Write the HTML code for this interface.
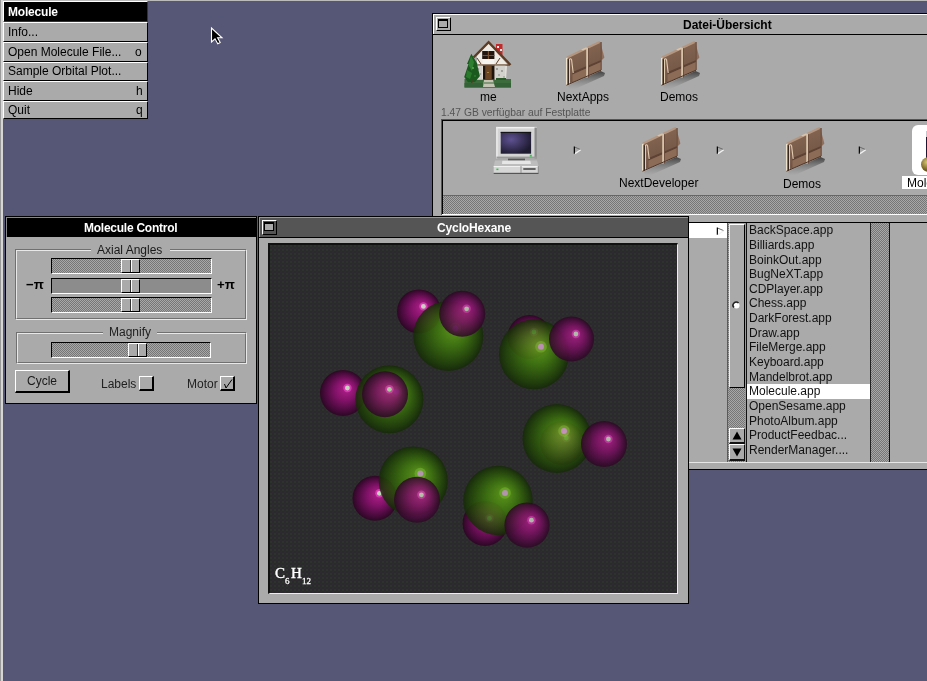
<!DOCTYPE html>
<html><head><meta charset="utf-8">
<style>
html,body{margin:0;padding:0;}
body{width:927px;height:681px;position:relative;overflow:hidden;background:#565676;font-family:"Liberation Sans",sans-serif;font-size:12px;color:#000;}
.a{position:absolute;box-sizing:border-box;}
.t{position:absolute;white-space:pre;line-height:1;will-change:transform;}
.b{font-weight:bold;}
.knob{width:19px;height:14px;background:linear-gradient(90deg,transparent 8px,#333 8px,#333 9px,#fff 9px,#fff 10px,transparent 10px),#aaa;border-left:1px solid #fff;border-top:1px solid #fff;border-right:1px solid #000;border-bottom:1px solid #000;box-sizing:border-box;}
.dith{background-color:#999;background-image:repeating-conic-gradient(#767676 0 25%,#a8a8a8 0 50%);background-size:2px 2px;}
</style></head><body>
<svg width="0" height="0" style="position:absolute">
<defs>
<linearGradient id="fg" x1="0" y1="0" x2="0.3" y2="1"><stop offset="0" stop-color="#8a6a56"/><stop offset="1" stop-color="#6e5242"/></linearGradient>
<radialGradient id="scr" cx="0.35" cy="0.35" r="0.7"><stop offset="0" stop-color="#5e5290"/><stop offset="1" stop-color="#1e1a30"/></radialGradient>
<linearGradient id="shd" x1="0" y1="0" x2="0" y2="1"><stop offset="0" stop-color="#333" stop-opacity=".9"/><stop offset="1" stop-color="#777" stop-opacity="0"/></linearGradient>
<symbol id="fold" viewBox="0 0 44 50">
 <polygon points="2,44.5 34.5,30 39,32 38,35 8,48.5 3,48" fill="url(#shd)"/>
 <polygon points="0.3,17 33.6,0.8 35.2,1.5 35.2,29 0.3,43.8" fill="url(#fg)"/>
 <polygon points="35,4 38.4,16.5 36.5,18.5 35,19" fill="#8e6e5c"/>
 <polyline points="1,16.6 33.6,1" stroke="#b49680" stroke-width="2.2" fill="none"/>
 <polygon points="6.5,31 35.2,19 35.2,21 6.5,33.5" fill="#5e4234"/>
 <polygon points="6.5,33.5 35.2,21 35.2,29 6.5,41" fill="#8c6c56"/>
 <line x1="35.2" y1="1" x2="35.2" y2="29" stroke="#6a4c3c" stroke-width="1"/>
 <rect x="20.2" y="7" width="1.8" height="29.5" fill="#d8c2aa"/>
 <line x1="22.5" y1="7" x2="22.5" y2="36.5" stroke="#6a4c3c" stroke-width=".9"/>
 <polygon points="15,8.5 20,6.2 22.6,7 17,9.5" fill="#d8c2aa"/>
 <polygon points="0,17 1.6,16.4 1.6,43.5 0,44" fill="#efe2cc"/>
 <polygon points="1.6,18 3,18.5 3,44 1.6,44" fill="#2e2018"/>
 <path d="M3.5,43.5 L3.5,18.3 Q4.8,16.8 5.6,19 L7.2,32" stroke="#e2ccb2" stroke-width="1.1" fill="none"/>
 <line x1="0.5" y1="44.2" x2="35" y2="29.2" stroke="#4a3428" stroke-width="1"/>
</symbol>
</defs></svg>
<!-- screen edges -->
<div class="a" style="left:0;top:0;width:927px;height:1px;background:#bbb"></div>
<div class="a" style="left:0;top:0;width:1px;height:681px;background:#999"></div>
<div class="a" style="left:1px;top:0;width:2px;height:681px;background:#d6d6d6"></div>

<!-- ============ MENU ============ -->
<div id="menu">
<div class="a" style="left:3px;top:1px;width:145px;height:21px;background:#000;border-left:1px solid #fff;border-top:1px solid #fff;border-right:1px solid #333;border-bottom:1px solid #333"></div>
<div class="t b" style="left:8px;top:6px;color:#fff;font-size:12px;letter-spacing:-0.2px">Molecule</div>
<div class="a" style="left:3px;top:22px;width:145px;height:20px;background:#aaa;border-left:1px solid #fff;border-top:1px solid #fff;border-right:1px solid #000;border-bottom:1px solid #000"></div>
<div class="t" style="left:8px;top:26px">Info...</div>
<div class="a" style="left:3px;top:42px;width:145px;height:20px;background:#aaa;border-left:1px solid #fff;border-top:1px solid #fff;border-right:1px solid #000;border-bottom:1px solid #000"></div>
<div class="t" style="left:8px;top:46px">Open Molecule File...</div>
<div class="t" style="left:135px;top:46px">o</div>
<div class="a" style="left:3px;top:62px;width:145px;height:19px;background:#aaa;border-left:1px solid #fff;border-top:1px solid #fff;border-right:1px solid #000;border-bottom:1px solid #000"></div>
<div class="t" style="left:8px;top:65px">Sample Orbital Plot...</div>
<div class="a" style="left:3px;top:81px;width:145px;height:20px;background:#aaa;border-left:1px solid #fff;border-top:1px solid #fff;border-right:1px solid #000;border-bottom:1px solid #000"></div>
<div class="t" style="left:8px;top:85px">Hide</div>
<div class="t" style="left:136px;top:85px">h</div>
<div class="a" style="left:3px;top:101px;width:145px;height:18px;background:#aaa;border-left:1px solid #fff;border-top:1px solid #fff;border-right:1px solid #000;border-bottom:1px solid #000"></div>
<div class="t" style="left:8px;top:104px">Quit</div>
<div class="t" style="left:136px;top:104px">q</div>
</div>

<!-- cursor -->
<svg class="a" style="left:209px;top:26px" width="16" height="20" viewBox="0 0 16 20"><polygon points="2.5,2 2.5,16 6,12.8 8.8,17.8 11.2,16.6 8.6,11.8 13,11.8" fill="#000" stroke="#fff" stroke-width="1.1" stroke-linejoin="miter"/></svg>
<!-- ============ DATEI WINDOW ============ -->
<div id="datei">
<div class="a" style="left:432px;top:13px;width:500px;height:457px;background:#aaa;border:1px solid #000"></div>
<div class="a" style="left:433px;top:14px;width:500px;height:1px;background:#fff"></div>
<div class="a" style="left:433px;top:14px;width:1px;height:20px;background:#fff"></div>
<div class="a" style="left:432px;top:34px;width:500px;height:1px;background:#000"></div>
<!-- miniaturize btn -->
<div class="a" style="left:436px;top:17px;width:15px;height:14px;background:#aaa;border-left:1px solid #fff;border-top:1px solid #fff;border-right:1px solid #000;border-bottom:1px solid #000"></div>
<div class="a" style="left:438px;top:19px;width:10px;height:9px;background:#aaa;border:1px solid #000;border-top-width:2px"></div>
<div class="t b" style="left:683px;top:19px;">Datei-Übersicht</div>
<!-- shelf icons -->
<svg class="a" style="left:460px;top:38px" width="55" height="52" viewBox="0 0 55 52">
  <polygon points="4.5,41 51,41 51,49.5 4.5,49.5" fill="#3c6c3c"/>
  <polygon points="4.5,45 51,45 51,49.5 4.5,49.5" fill="#346236"/>
  <polygon points="24,42 33,42 35,49 23,49" fill="#c4c4b4"/><rect x="24" y="44.5" width="11" height="1" fill="#3c6c3c"/>
  <rect x="36" y="6" width="6.5" height="11" fill="#c42a2a"/>
  <rect x="37" y="8" width="2" height="2" fill="#eee"/><rect x="40" y="11" width="2" height="2" fill="#eee"/>
  <polygon points="17,18 28.6,5 47,26 46,41.5 17,41.5" fill="#eeeae4"/>
  <polyline points="13.5,19.5 28.6,4.2 50.5,27" fill="none" stroke="#5e3c24" stroke-width="2.4"/>
  <rect x="22.2" y="13" width="12.2" height="8" fill="#24160e"/>
  <rect x="27.8" y="13" width="1.2" height="8" fill="#7a5030"/>
  <rect x="22.2" y="17" width="12.2" height="1" fill="#7a5030"/>
  <rect x="22.5" y="21.4" width="11.5" height="5" fill="#f6f4f0"/>
  <line x1="17" y1="20" x2="21" y2="26" stroke="#5e3c24" stroke-width="1"/>
  <line x1="40" y1="20" x2="36" y2="26" stroke="#5e3c24" stroke-width="1"/>
  <rect x="16.5" y="26.4" width="33" height="1.3" fill="#5e3c24"/>
  <rect x="16.8" y="27.7" width="5.7" height="13.8" fill="#d4d2cc"/><circle cx="18.5" cy="31" r=".8" fill="#8a8a88"/><circle cx="20.5" cy="36" r=".8" fill="#8a8a88"/><circle cx="18" cy="39" r=".8" fill="#9a9a98"/>
  <rect x="34.8" y="27.7" width="10.7" height="13.8" fill="#d4d2cc"/><circle cx="37" cy="31" r=".9" fill="#8a8a88"/><circle cx="42" cy="33" r=".9" fill="#8a8a88"/><circle cx="39" cy="37" r=".9" fill="#9a9a98"/><circle cx="44" cy="39" r=".8" fill="#8a8a88"/>
  <rect x="23" y="27.7" width="11.5" height="14" fill="#1e140c"/>
  <rect x="25.2" y="27.7" width="6.5" height="13.8" fill="#6a4626"/>
  <rect x="27.5" y="34" width="1" height="1" fill="#e0c060"/>
  <polygon points="11.3,15.7 7,26 8.5,26 4.2,39 8,44.3 15,44 19.9,38 17,26 17.5,26" fill="#1a5a1e"/>
  <polygon points="11,18 8.5,27 12,33 14,24" fill="#2e8030"/><circle cx="13" cy="30" r="1" fill="#5aa850"/><circle cx="9" cy="36" r="1" fill="#5aa850"/><circle cx="15" cy="38" r="1" fill="#2c7a2c"/>
  <polygon points="7,32 6,39 10,41 12,35" fill="#2a7a2c"/>
  <rect x="11" y="42" width="1.5" height="3" fill="#5a3a22"/>
  <rect x="36" y="40" width="10" height="2" fill="#2a5a2a"/>
</svg>
<div class="t" style="left:480px;top:91px">me</div>
<svg class="a" style="left:566px;top:41px" width="44" height="50" viewBox="0 0 44 50"><use href="#fold"/></svg>
<div class="t" style="left:557px;top:91px">NextApps</div>
<svg class="a" style="left:661px;top:41px" width="44" height="50" viewBox="0 0 44 50"><use href="#fold"/></svg>
<div class="t" style="left:660px;top:91px">Demos</div>
<div class="t" style="left:441px;top:108px;font-size:10.3px;color:#555">1.47 GB verfügbar auf Festplatte</div>

<!-- path box -->
<div class="a" style="left:441px;top:119px;width:500px;height:96px;background:#aaa;border-left:1px solid #555;border-top:1px solid #555"></div>
<div class="a" style="left:442px;top:120px;width:500px;height:95px;border-left:1px solid #000;border-top:1px solid #000"></div>
<div class="a" style="left:443px;top:195px;width:500px;height:1px;background:#666"></div>
<div class="a dith" style="left:443px;top:196px;width:500px;height:18px;"></div>
<div class="a" style="left:442px;top:214px;width:500px;height:1px;background:#fff"></div>
<!-- computer icon -->
<svg class="a" style="left:490px;top:122px" width="55" height="56" viewBox="0 0 55 56">
  <rect x="6.2" y="4.9" width="40.7" height="31.7" rx="1.5" fill="#d4d4d4"/>
  <rect x="6.2" y="4.9" width="40.7" height="1.5" fill="#f2f2f2"/>
  <rect x="6.2" y="4.9" width="1.5" height="31.7" fill="#ececec"/>
  <rect x="44.5" y="5.5" width="2.4" height="31" fill="#8a8a8a"/>
  <rect x="6.5" y="34.6" width="40.4" height="2" fill="#9a9a9a"/>
  <rect x="10.7" y="9.9" width="30.4" height="21.8" fill="url(#scr)"/>
  <rect x="10.7" y="9.9" width="30.4" height="1" fill="#111"/>
  <rect x="39.8" y="32.8" width="2" height="1.8" fill="#22cc44"/>
  <rect x="18" y="36.6" width="17" height="2.2" fill="#555"/>
  <polygon points="5,38.6 47,38.6 48.5,44 3.7,44" fill="#bdbdbd"/>
  <polygon points="12.3,38.7 40.3,38.7 41,42 12,42" fill="#e6e6e6"/>
  <rect x="3.7" y="44" width="44.8" height="7" fill="#d6d6d6"/>
  <rect x="3.7" y="44" width="44.8" height="1" fill="#f0f0f0"/>
  <rect x="3.7" y="50.8" width="44.8" height="1.2" fill="#555"/>
  <rect x="30.6" y="44" width=".8" height="7" fill="#808080"/>
  <rect x="33.3" y="46.3" width="12.3" height="1.4" fill="#333"/>
  <rect x="6.4" y="46.6" width="2" height="1.5" fill="#22cc44"/>
  <rect x="47.8" y="44" width="1" height="7" fill="#888"/>
</svg>
<svg class="a" style="left:572px;top:145px" width="12" height="12" viewBox="0 0 12 12"><line x1="2.35" y1="1.5" x2="2.35" y2="8.8" stroke="#000" stroke-width="1.2"/><line x1="3" y1="2.2" x2="8.8" y2="4.7" stroke="#6a6a6a" stroke-width="1"/><line x1="3" y1="8.6" x2="8.8" y2="4.7" stroke="#f2f2f2" stroke-width="1.3"/></svg>
<svg class="a" style="left:642px;top:127px" width="44" height="50" viewBox="0 0 44 50"><use href="#fold"/></svg>
<div class="t" style="left:619px;top:177px">NextDeveloper</div>
<svg class="a" style="left:714.7px;top:145px" width="12" height="12" viewBox="0 0 12 12"><line x1="2.35" y1="1.5" x2="2.35" y2="8.8" stroke="#000" stroke-width="1.2"/><line x1="3" y1="2.2" x2="8.8" y2="4.7" stroke="#6a6a6a" stroke-width="1"/><line x1="3" y1="8.6" x2="8.8" y2="4.7" stroke="#f2f2f2" stroke-width="1.3"/></svg>
<svg class="a" style="left:785.5px;top:126.5px" width="44" height="50" viewBox="0 0 44 50"><use href="#fold"/></svg>
<div class="t" style="left:783px;top:178px">Demos</div>
<svg class="a" style="left:857.2px;top:145px" width="12" height="12" viewBox="0 0 12 12"><line x1="2.35" y1="1.5" x2="2.35" y2="8.8" stroke="#000" stroke-width="1.2"/><line x1="3" y1="2.2" x2="8.8" y2="4.7" stroke="#6a6a6a" stroke-width="1"/><line x1="3" y1="8.6" x2="8.8" y2="4.7" stroke="#f2f2f2" stroke-width="1.3"/></svg>
<!-- Molecule app icon -->
<div class="a" style="left:912px;top:125px;width:30px;height:50px;background:#fff;border-radius:6px"></div>
<div class="a" style="left:926px;top:131px;width:5px;height:6px;background:#c8c8d0"></div><div class="a" style="left:926px;top:137px;width:5px;height:21px;background:#1e1634"></div>
<div class="a" style="left:921px;top:157px;width:15px;height:15px;border-radius:50%;background:radial-gradient(circle at 40% 35%,#d8c878,#7a6424 55%,#2e2410)"></div>
<div class="a" style="left:902px;top:176px;width:30px;height:13px;background:#fff"></div>
<div class="t" style="left:906.5px;top:177px">Molecule</div>

<!-- browser columns -->
<div class="a" style="left:432px;top:222px;width:500px;height:1px;background:#000"></div>
<div class="a" style="left:689px;top:223px;width:39px;height:15px;background:#fff"></div>
<svg class="a" style="left:715px;top:225.5px" width="12" height="12" viewBox="0 0 12 12"><line x1="2.35" y1="1.5" x2="2.35" y2="8.8" stroke="#000" stroke-width="1.2"/><line x1="3" y1="2.2" x2="8.8" y2="4.7" stroke="#6a6a6a" stroke-width="1"/><line x1="3" y1="8.6" x2="8.8" y2="4.7" stroke="#f2f2f2" stroke-width="1.3"/></svg>
<!-- scroller A -->
<div class="a" style="left:727px;top:223px;width:1px;height:239px;background:#5a5a5a"></div>
<div class="a dith" style="left:728px;top:223px;width:18px;height:239px;"></div>
<div class="a" style="left:728px;top:223px;width:18px;height:1px;background:#aaa"></div>
<div class="a" style="left:729px;top:224px;width:16px;height:164px;background:#aaa;border-left:1px solid #eee;border-top:1px solid #fff;border-right:1px solid #000;border-bottom:1px solid #000"></div>
<svg class="a" style="left:732px;top:301px" width="9" height="9" viewBox="0 0 9 9"><circle cx="4.5" cy="4.5" r="3" fill="#fff"/><path d="M2,6.5 A3,3 0 0 1 6.5,2" stroke="#222" stroke-width="1.6" fill="none"/></svg>
<div class="a" style="left:729px;top:428px;width:16px;height:16px;background:#aaa;border-left:1px solid #fff;border-top:1px solid #fff;border-right:1px solid #111;border-bottom:2px solid #111"></div>
<svg class="a" style="left:731px;top:431px" width="12" height="10" viewBox="0 0 12 10"><polygon points="6,0.5 10.5,8.5 1.5,8.5" fill="#000"/></svg>
<div class="a" style="left:729px;top:444px;width:16px;height:17px;background:#aaa;border-left:1px solid #fff;border-top:1px solid #fff;border-right:1px solid #111;border-bottom:2px solid #111"></div>
<svg class="a" style="left:731px;top:448px" width="12" height="10" viewBox="0 0 12 10"><polygon points="1.5,0.5 10.5,0.5 6,8.5" fill="#000"/></svg>
<div class="a" style="left:745px;top:223px;width:1px;height:239px;background:#999"></div>
<!-- list B -->
<div class="a" style="left:746px;top:223px;width:1px;height:239px;background:#111"></div>
<div class="a" style="left:747px;top:384px;width:123px;height:15px;background:#fff"></div>
<div id="listB" style="position:absolute;left:749px;top:223px;color:#111">
<div class="t" style="left:0;top:1.24px">BackSpace.app</div>
<div class="t" style="left:0;top:15.89px">Billiards.app</div>
<div class="t" style="left:0;top:30.54px">BoinkOut.app</div>
<div class="t" style="left:0;top:45.19px">BugNeXT.app</div>
<div class="t" style="left:0;top:59.84px">CDPlayer.app</div>
<div class="t" style="left:0;top:74.49px">Chess.app</div>
<div class="t" style="left:0;top:89.14px">DarkForest.app</div>
<div class="t" style="left:0;top:103.79px">Draw.app</div>
<div class="t" style="left:0;top:118.44px">FileMerge.app</div>
<div class="t" style="left:0;top:133.09px">Keyboard.app</div>
<div class="t" style="left:0;top:147.74px">Mandelbrot.app</div>
<div class="t" style="left:0;top:162.39px">Molecule.app</div>
<div class="t" style="left:0;top:177.04px">OpenSesame.app</div>
<div class="t" style="left:0;top:191.69px">PhotoAlbum.app</div>
<div class="t" style="left:0;top:206.34px">ProductFeedbac...</div>
<div class="t" style="left:0;top:220.99px">RenderManager....</div>
</div>
<!-- scroller B -->
<div class="a" style="left:870px;top:223px;width:1px;height:239px;background:#222"></div>
<div class="a dith" style="left:871px;top:223px;width:18px;height:239px;"></div>
<div class="a" style="left:889px;top:223px;width:1px;height:239px;background:#111"></div>
<div class="a" style="left:689px;top:462px;width:300px;height:1px;background:#e6e6e6"></div>
</div>

<!-- ============ MOLECULE CONTROL ============ -->
<div id="ctrl">
<div class="a" style="left:5px;top:216px;width:252px;height:188px;background:#aaa;border:1px solid #000"></div>
<div class="a" style="left:6px;top:217px;width:250px;height:20px;background:#000;border-left:1px solid #888;border-top:1px solid #888"></div>
<div class="t b" style="left:84px;top:222px;color:#fff;letter-spacing:-0.25px">Molecule Control</div>
<!-- axial group -->
<div class="a" style="left:15px;top:249px;width:232px;height:71px;border-left:1px solid #707070;border-top:1px solid #707070;border-right:1px solid #e8e8e8;border-bottom:1px solid #e8e8e8"></div>
<div class="a" style="left:16px;top:250px;width:230px;height:69px;border-left:1px solid #e8e8e8;border-top:1px solid #e8e8e8;border-right:1px solid #707070;border-bottom:1px solid #707070"></div>
<div class="a" style="left:91px;top:244px;width:79px;height:10px;background:#aaa"></div>
<div class="t" style="left:97px;top:244px;color:#1a1a1a">Axial Angles</div>
<div class="a dith" style="left:51px;top:258px;width:161px;height:16px;border-left:1px solid #000;border-top:1px solid #000;border-right:1px solid #fff;border-bottom:1px solid #fff"></div>
<div class="a" style="left:51px;top:278px;width:161px;height:16px;background:#8c8c8c;border-left:1px solid #000;border-top:1px solid #000;border-right:1px solid #fff;border-bottom:1px solid #fff"></div>
<div class="a dith" style="left:51px;top:297px;width:161px;height:16px;border-left:1px solid #000;border-top:1px solid #000;border-right:1px solid #fff;border-bottom:1px solid #fff"></div>
<div class="a knob" style="left:121px;top:259px"></div>
<div class="a knob" style="left:121px;top:279px"></div>
<div class="a knob" style="left:121px;top:298px"></div>
<div class="t b" style="left:26px;top:277.5px;font-size:13.2px">−π</div>
<div class="t b" style="left:217px;top:277.5px;font-size:13.2px">+π</div>
<!-- magnify group -->
<div class="a" style="left:16px;top:332px;width:231px;height:32px;border-left:1px solid #707070;border-top:1px solid #707070;border-right:1px solid #e8e8e8;border-bottom:1px solid #e8e8e8"></div>
<div class="a" style="left:17px;top:333px;width:229px;height:30px;border-left:1px solid #e8e8e8;border-top:1px solid #e8e8e8;border-right:1px solid #707070;border-bottom:1px solid #707070"></div>
<div class="a" style="left:103px;top:327px;width:54px;height:10px;background:#aaa"></div>
<div class="t" style="left:109px;top:326px;color:#222">Magnify</div>
<div class="a dith" style="left:51px;top:342px;width:160px;height:16px;border-left:1px solid #000;border-top:1px solid #000;border-right:1px solid #fff;border-bottom:1px solid #fff"></div>
<div class="a knob" style="left:128px;top:343px"></div>
<!-- buttons -->
<div class="a" style="left:15px;top:370px;width:55px;height:23px;background:#aaa;border-left:1px solid #fff;border-top:1px solid #fff;border-right:2px solid #000;border-bottom:2px solid #000"></div>
<div class="t" style="left:26.5px;top:375px;color:#1a1a1a">Cycle</div>
<div class="t" style="left:101px;top:378px;color:#222">Labels</div>
<div class="a" style="left:139px;top:376px;width:15px;height:15px;background:#aaa;border-left:1px solid #fff;border-top:1px solid #fff;border-right:2px solid #000;border-bottom:2px solid #000"></div>
<div class="t" style="left:187px;top:378px;color:#222">Motor</div>
<div class="a" style="left:220px;top:376px;width:15px;height:15px;background:#aaa;border-left:1px solid #fff;border-top:1px solid #fff;border-right:2px solid #000;border-bottom:2px solid #000"></div>
<svg class="a" style="left:222px;top:378px" width="11" height="11" viewBox="0 0 11 11"><path d="M2.5,6 L4,10 L10,1.5" stroke="#000" stroke-width="1" fill="none"/></svg>
</div>

<!-- ============ CYCLOHEXANE ============ -->
<div id="cyclo">
<div class="a" style="left:258px;top:216px;width:431px;height:388px;background:#aaa;border:1px solid #000"></div>
<div class="a" style="left:259px;top:217px;width:429px;height:20px;background:#555;border-left:1px solid #999;border-top:1px solid #999"></div>
<div class="a" style="left:258px;top:237px;width:431px;height:1px;background:#000"></div>
<div class="t b" style="left:436.5px;top:222px;color:#fff;letter-spacing:-0.12px">CycloHexane</div>
<div class="a" style="left:268px;top:243px;width:410px;height:351px;background-color:#2a2a2b;background-image:radial-gradient(circle at 1px 1px,rgba(50,80,50,.2) 0.9px,transparent 1.3px),radial-gradient(circle at 3px 3px,rgba(70,40,70,.18) 0.9px,transparent 1.3px);background-size:4px 4px;border-left:2px solid #111;border-top:2px solid #111;border-right:1px solid #eee;border-bottom:1px solid #eee"></div>
<div class="a" style="left:262px;top:220px;width:15px;height:15px;background:#555;border-left:1px solid #fff;border-top:1px solid #fff;border-right:1px solid #000;border-bottom:1px solid #000"></div>
<div class="a" style="left:264px;top:222px;width:10px;height:9px;background:#aaa;border:1px solid #000;border-top-width:2px"></div>
<svg class="a" style="left:270px;top:245px" width="407" height="348" viewBox="270 245 407 348">
<defs>
<radialGradient id="gC" cx="0.5" cy="0.5" r="0.5" fx="0.6" fy="0.39"><stop offset="0" stop-color="#68b018"/><stop offset="0.45" stop-color="#3f7a0c"/><stop offset="0.85" stop-color="#1f4206"/><stop offset="1" stop-color="#142a06"/></radialGradient>
<radialGradient id="gH" cx="0.5" cy="0.5" r="0.5" fx="0.6" fy="0.39"><stop offset="0" stop-color="#b4228e"/><stop offset="0.45" stop-color="#821268"/><stop offset="0.85" stop-color="#440a38"/><stop offset="1" stop-color="#2c0824"/></radialGradient>
</defs>
<circle cx="419" cy="311.4" r="22" fill="url(#gH)"/>
<circle cx="423.4" cy="306.4" r="4.2" fill="#d23aae"/><circle cx="423.4" cy="306.4" r="2.4" fill="#c8d4c0"/>
<g opacity="0.82"><circle cx="448.3" cy="336" r="35" fill="url(#gC)"/><circle cx="455.3" cy="328.5" r="5.8" fill="#74bc26"/><circle cx="455.3" cy="328.5" r="3" fill="#d0acc8"/></g>
<g opacity="0.85"><circle cx="462.2" cy="313.8" r="23" fill="url(#gH)"/><circle cx="466.6" cy="308.8" r="4.2" fill="#d23aae"/><circle cx="466.6" cy="308.8" r="2.4" fill="#c8d4c0"/></g>
<circle cx="529.5" cy="337" r="22" fill="url(#gH)"/>
<circle cx="533.9" cy="332" r="4.2" fill="#d23aae"/><circle cx="533.9" cy="332" r="2.4" fill="#c8d4c0"/>
<g opacity="0.82"><circle cx="534" cy="354.3" r="35" fill="url(#gC)"/><circle cx="541" cy="346.8" r="5.8" fill="#74bc26"/><circle cx="541" cy="346.8" r="3" fill="#d0acc8"/></g>
<g opacity="0.85"><circle cx="571.5" cy="339" r="22.5" fill="url(#gH)"/><circle cx="575.9" cy="334" r="4.2" fill="#d23aae"/><circle cx="575.9" cy="334" r="2.4" fill="#c8d4c0"/></g>
<circle cx="343" cy="393" r="23" fill="url(#gH)"/>
<circle cx="347.4" cy="388" r="4.2" fill="#d23aae"/><circle cx="347.4" cy="388" r="2.4" fill="#c8d4c0"/>
<g opacity="0.82"><circle cx="389.4" cy="399.3" r="34" fill="url(#gC)"/><circle cx="396.4" cy="391.8" r="5.8" fill="#74bc26"/><circle cx="396.4" cy="391.8" r="3" fill="#d0acc8"/></g>
<g opacity="0.85"><circle cx="385" cy="394.3" r="23" fill="url(#gH)"/><circle cx="389.4" cy="389.3" r="4.2" fill="#d23aae"/><circle cx="389.4" cy="389.3" r="2.4" fill="#c8d4c0"/></g>
<circle cx="562" cy="443" r="22" fill="url(#gH)"/>
<circle cx="566.4" cy="438" r="4.2" fill="#d23aae"/><circle cx="566.4" cy="438" r="2.4" fill="#c8d4c0"/>
<g opacity="0.82"><circle cx="557" cy="438.5" r="34.5" fill="url(#gC)"/><circle cx="564" cy="431.0" r="5.8" fill="#74bc26"/><circle cx="564" cy="431.0" r="3" fill="#d0acc8"/></g>
<g opacity="0.85"><circle cx="604" cy="444" r="23" fill="url(#gH)"/><circle cx="608.4" cy="439" r="4.2" fill="#d23aae"/><circle cx="608.4" cy="439" r="2.4" fill="#c8d4c0"/></g>
<circle cx="375" cy="498.3" r="22.5" fill="url(#gH)"/>
<circle cx="379.4" cy="493.3" r="4.2" fill="#d23aae"/><circle cx="379.4" cy="493.3" r="2.4" fill="#c8d4c0"/>
<g opacity="0.82"><circle cx="413.3" cy="481" r="34.6" fill="url(#gC)"/><circle cx="420.3" cy="473.5" r="5.8" fill="#74bc26"/><circle cx="420.3" cy="473.5" r="3" fill="#d0acc8"/></g>
<g opacity="0.85"><circle cx="417" cy="499.8" r="23" fill="url(#gH)"/><circle cx="421.4" cy="494.8" r="4.2" fill="#d23aae"/><circle cx="421.4" cy="494.8" r="2.4" fill="#c8d4c0"/></g>
<circle cx="485" cy="523.4" r="22.5" fill="url(#gH)"/>
<circle cx="489.4" cy="518.4" r="4.2" fill="#d23aae"/><circle cx="489.4" cy="518.4" r="2.4" fill="#c8d4c0"/>
<g opacity="0.82"><circle cx="498" cy="500.5" r="34.7" fill="url(#gC)"/><circle cx="505" cy="493.0" r="5.8" fill="#74bc26"/><circle cx="505" cy="493.0" r="3" fill="#d0acc8"/></g>
<g opacity="0.85"><circle cx="527" cy="525.2" r="22.6" fill="url(#gH)"/><circle cx="531.4" cy="520.2" r="4.2" fill="#d23aae"/><circle cx="531.4" cy="520.2" r="2.4" fill="#c8d4c0"/></g>
</svg>
<div class="t" style="left:275px;top:566px;color:#fff;font-family:'Liberation Serif',serif;font-size:15px;-webkit-text-stroke:.4px #fff">C</div>
<div class="t" style="left:285px;top:577px;color:#fff;font-family:'Liberation Serif',serif;font-size:9px;-webkit-text-stroke:.3px #fff">6</div>
<div class="t" style="left:290.5px;top:566px;color:#fff;font-family:'Liberation Serif',serif;font-size:15px;-webkit-text-stroke:.4px #fff">H</div>
<div class="t" style="left:302px;top:577px;color:#fff;font-family:'Liberation Serif',serif;font-size:9px;-webkit-text-stroke:.3px #fff">12</div>

</div>
</body></html>
